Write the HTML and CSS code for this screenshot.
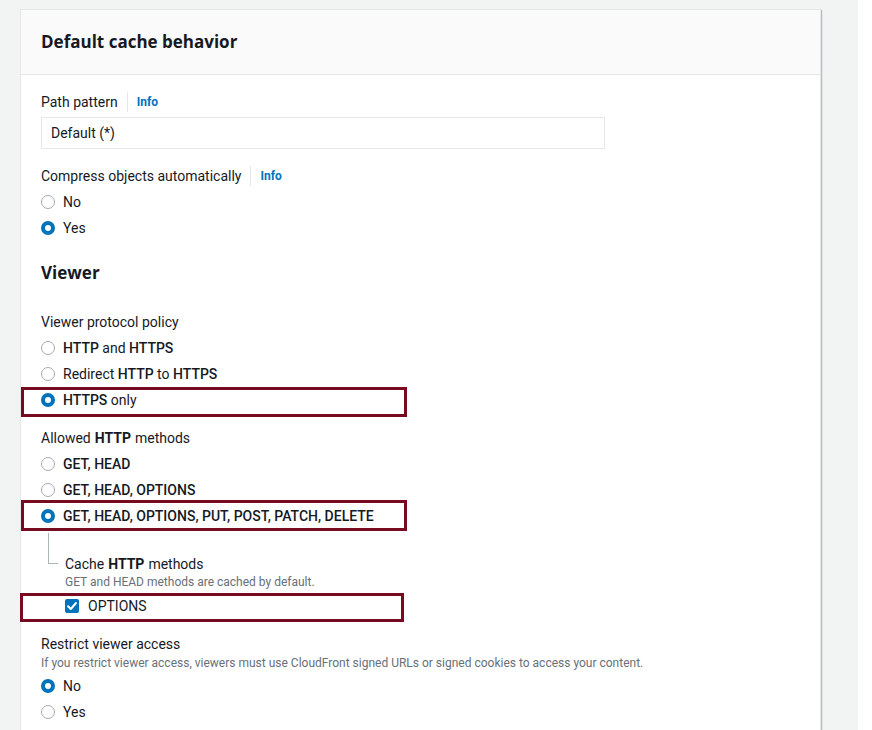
FILE: index.html
```html
<!DOCTYPE html>
<html lang="en">
<head>
<meta charset="utf-8">
<title>Default cache behavior</title>
<link rel="stylesheet" href="styles.css">
</head>
<body>
<div class="page">
  <section class="card">
    <header class="card-head"><h2 class="card-title">Default cache behavior</h2></header>
    <div class="card-body">
      <div class="label">Path pattern <span class="info">Info</span></div>
      <div class="input">Default (*)</div>

      <div class="label gap-17">Compress objects automatically <span class="info">Info</span></div>
      <div class="radios">
        <div class="row"><span class="radio"></span><span>No</span></div>
        <div class="row"><span class="radio on"></span><span>Yes</span></div>
      </div>

      <h3 class="section-title">Viewer</h3>

      <div class="label gap-27">Viewer protocol policy</div>
      <div class="radios">
        <div class="row"><span class="radio"></span><span><b>HTTP</b> and <b>HTTPS</b></span></div>
        <div class="row"><span class="radio"></span><span>Redirect <b>HTTP</b> to <b>HTTPS</b></span></div>
        <div class="row hl hl-a"><span class="radio on"></span><span><b>HTTPS</b> only</span></div>
      </div>

      <div class="label gap-15">Allowed <b>HTTP</b> methods</div>
      <div class="radios">
        <div class="row"><span class="radio"></span><b>GET, HEAD</b></div>
        <div class="row"><span class="radio"></span><b>GET, HEAD, OPTIONS</b></div>
        <div class="row hl hl-b"><span class="radio on"></span><b>GET, HEAD, OPTIONS, PUT, POST, PATCH, DELETE</b></div>
      </div>

      <div class="sub">
        <div class="label">Cache <b>HTTP</b> methods</div>
        <div class="desc">GET and HEAD methods are cached by default.</div>
        <div class="row check-row hl hl-c">
          <span class="checkbox"><svg viewBox="0 0 14 14" width="14" height="14"><path d="M3 7.2 L5.8 10 L11 4" fill="none" stroke="#fff" stroke-width="2" stroke-linecap="round" stroke-linejoin="round"/></svg></span>
          <span>OPTIONS</span>
        </div>
      </div>

      <div class="label gap-15">Restrict viewer access</div>
      <div class="desc desc-top">If you restrict viewer access, viewers must use CloudFront signed URLs or signed cookies to access your content.</div>
      <div class="radios radios-tight">
        <div class="row"><span class="radio on"></span><span>No</span></div>
        <div class="row"><span class="radio"></span><span>Yes</span></div>
      </div>
    </div>
  </section>
</div>
</body>
</html>
```

FILE: styles.css
```css
html, body {
  margin: 0;
  padding: 0;
  background: #ffffff;
  height: 730px;
  overflow: hidden;
}

body {
  font-family: Roboto, "Open Sans", Arial, sans-serif;
  font-size: 14px;
  color: #16191f;
}

.page {
  width: 858px;
  height: 730px;
  background: #f2f3f3;
  padding: 9px 0 0 20px;
  box-sizing: border-box;
}

.card {
  width: 801px;
  box-sizing: border-box;
  background: #ffffff;
  border: 1px solid #e6e8e8;
  border-bottom: none;
  box-shadow: 1px 1px 1px 0 rgba(0, 28, 36, 0.25);
  height: 740px;
}

.card-head {
  height: 64px;
  background: #fafafa;
  border-bottom: 1px solid #e6e8e8;
  display: flex;
  align-items: center;
  padding: 0 20px;
}

.card-title {
  margin: 0;
  font-family: "Open Sans", Roboto, Arial, sans-serif;
  font-size: 17px;
  font-weight: 700;
  line-height: 24px;
}

.card-body {
  padding: 17px 20px 0 20px;
}

.label {
  line-height: 20px;
  display: flex;
  align-items: center;
}

.label b {
  margin: 0 4px;
}

.gap-15 { margin-top: 15px; }
.gap-17 { margin-top: 17px; }
.gap-27 { margin-top: 27px; }

.info {
  font-size: 12px;
  font-weight: 700;
  color: #0073bb;
  margin-left: 9px;
  padding-left: 9px;
  border-left: 1px solid #e6e8e8;
  line-height: 20px;
}

.input {
  margin-top: 5px;
  width: 564px;
  height: 32px;
  box-sizing: border-box;
  border: 1px solid #e6e8e8;
  padding: 0 9px;
  display: flex;
  align-items: center;
}

.radios {
  margin-top: 3px;
}

.radios-tight {
  margin-top: 2px;
}

.row {
  height: 26px;
  display: flex;
  align-items: center;
  gap: 8px;
  position: relative;
}

.row b {
  font-weight: 500;
}

.radio {
  width: 14px;
  height: 14px;
  box-sizing: border-box;
  border-radius: 50%;
  border: 1.5px solid #a5adb0;
  background: #ffffff;
  flex: none;
}

.radio.on {
  border: 4px solid #0073bb;
}

.section-title {
  margin: 20px 0 0 0;
  font-family: "Open Sans", Roboto, Arial, sans-serif;
  font-size: 17px;
  font-weight: 700;
  line-height: 24px;
}

.sub {
  position: relative;
  padding: 25px 0 0 24px;
}

.sub::before {
  content: "";
  position: absolute;
  left: 7px;
  top: 4px;
  width: 9px;
  height: 30px;
  border-left: 1px solid #aab7b8;
  border-bottom: 1px solid #aab7b8;
}

.desc {
  font-size: 12px;
  line-height: 16px;
  color: #687078;
}

.desc-top {
  margin-top: 1px;
}

.check-row {
  margin-top: 3px;
  gap: 9px;
}

.checkbox {
  width: 14px;
  height: 14px;
  border-radius: 2px;
  background: #0073bb;
  display: flex;
  flex: none;
}

.hl::after {
  content: "";
  position: absolute;
  border: 3px solid #790b20;
  box-sizing: border-box;
}

.hl-a::after {
  left: -20px;
  top: 0;
  width: 386px;
  height: 30px;
}

.hl-b::after {
  left: -20px;
  top: -3px;
  width: 386px;
  height: 31px;
}

.hl-c::after {
  left: -45px;
  top: 0;
  width: 384px;
  height: 29px;
}
```
